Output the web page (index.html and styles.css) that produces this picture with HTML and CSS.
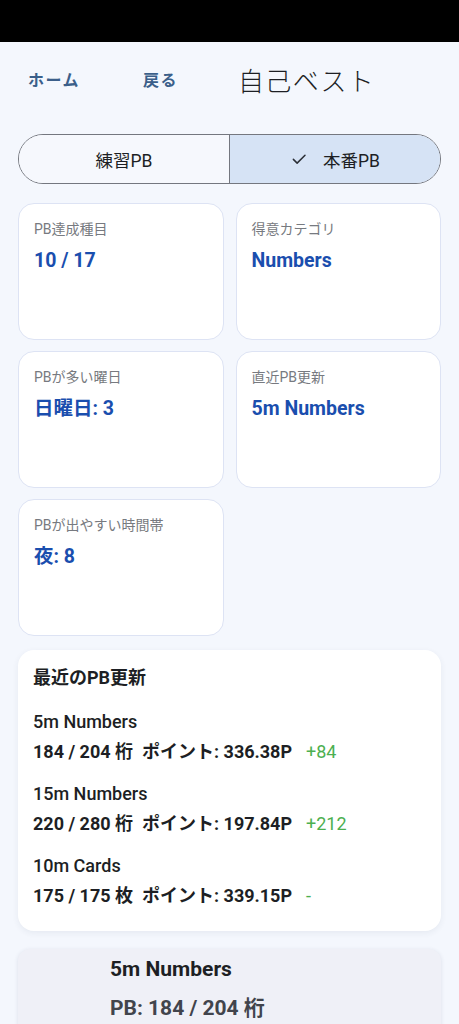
FILE: index.html
```html
<!DOCTYPE html>
<html lang="ja">
<head>
<meta charset="utf-8">
<link rel="stylesheet" href="styles.css">
</head>
<body>
<div class="statusbar"></div>
<header class="topbar">
  <a class="nav nav-home">ホーム</a>
  <a class="nav nav-back">戻る</a>
  <h1 class="title">自己ベスト</h1>
</header>
<div class="segmented">
  <div class="seg">練習PB</div>
  <div class="seg seg-active">
    <svg class="check" viewBox="0 0 24 24" width="18" height="18"><path d="M4.5 12.5l5 5L20 7" fill="none" stroke="#2b2f36" stroke-width="2" stroke-linecap="round" stroke-linejoin="round"/></svg>
    <span>本番PB</span>
  </div>
</div>
<section class="stats">
  <div class="stat"><div class="stat-label">PB達成種目</div><div class="stat-value">10 / 17</div></div>
  <div class="stat"><div class="stat-label">得意カテゴリ</div><div class="stat-value">Numbers</div></div>
  <div class="stat"><div class="stat-label">PBが多い曜日</div><div class="stat-value">日曜日: 3</div></div>
  <div class="stat"><div class="stat-label">直近PB更新</div><div class="stat-value">5m Numbers</div></div>
  <div class="stat"><div class="stat-label">PBが出やすい時間帯</div><div class="stat-value">夜: 8</div></div>
</section>
<section class="recent">
  <h2 class="recent-title">最近のPB更新</h2>
  <div class="item">
    <div class="item-name">5m Numbers</div>
    <div class="item-detail">184 / 204 桁&nbsp;&nbsp;ポイント: 336.38P<span class="diff">+84</span></div>
  </div>
  <div class="item">
    <div class="item-name">15m Numbers</div>
    <div class="item-detail">220 / 280 桁&nbsp;&nbsp;ポイント: 197.84P<span class="diff">+212</span></div>
  </div>
  <div class="item">
    <div class="item-name">10m Cards</div>
    <div class="item-detail">175 / 175 枚&nbsp;&nbsp;ポイント: 339.15P<span class="diff">-</span></div>
  </div>
</section>
<section class="event">
  <div class="event-name">5m Numbers</div>
  <div class="event-pb">PB: 184 / 204 桁</div>
</section>
</body>
</html>
```
FILE: styles.css
```css
* { box-sizing: border-box; }
html, body { margin: 0; padding: 0; }
body {
  background: #f4f7fd;
  font-family: Roboto, "Noto Sans CJK JP", sans-serif;
  color: #1d1f24;
  width: 459px;
  height: 1024px;
  overflow: hidden;
}
.statusbar { height: 42px; background: #000; }
.topbar {
  display: flex;
  align-items: center;
  height: 74px;
  padding-left: 28px;
}
.nav {
  font-size: 16px;
  font-weight: 700;
  color: #3b5f8a;
  letter-spacing: 1.5px;
  font-family: "Noto Sans CJK JP", sans-serif;
}
.nav-home { margin-right: 63px; }
.nav-back { margin-right: 60px; }
.title {
  margin: 0;
  font-size: 26px;
  font-weight: 300;
  letter-spacing: 1.3px;
  font-family: "Noto Sans CJK JP", sans-serif;
  color: #1d1f24;
}
.segmented {
  display: flex;
  margin: 18px 18px 0;
  height: 50px;
  border: 1.5px solid #74777f;
  border-radius: 25px;
  overflow: hidden;
}
.seg {
  flex: 1;
  display: flex;
  align-items: center;
  justify-content: center;
  font-size: 17.5px;
  font-family: Roboto, "Noto Sans CJK JP", sans-serif;
  color: #1d1f24;
  background: #f6f8fd;
}
.seg-active {
  background: #d6e3f5;
  border-left: 1.5px solid #74777f;
  gap: 15px;
}
.check { display: block; }
.stats {
  display: grid;
  grid-template-columns: 1fr 1fr;
  gap: 11px 12px;
  margin: 19px 18px 0;
}
.stat {
  height: 137px;
  background: #fff;
  border: 1px solid #dde3f4;
  border-radius: 16px;
  padding: 15px 15px;
}
.stat-label {
  font-size: 14px;
  color: #777a80;
  line-height: 20px;
}
.stat-value {
  margin-top: 9px;
  font-size: 19.5px;
  font-weight: 700;
  color: #1a4eae;
  line-height: 26px;
}
.recent {
  margin: 14px 18px 0;
  background: #fff;
  border-radius: 16px;
  box-shadow: 0 2px 6px rgba(40, 50, 90, 0.07);
  padding: 15px 15px 20px;
}
.recent-title {
  margin: 0 0 16px;
  font-size: 18px;
  font-weight: 700;
  line-height: 26px;
}
.item { margin-bottom: 12px; }
.item:last-child { margin-bottom: 0; }
.item-name {
  font-size: 18px;
  font-weight: 500;
  line-height: 30px;
}
.item-detail {
  font-size: 18px;
  font-weight: 700;
  line-height: 30px;
}
.diff {
  margin-left: 14px;
  color: #4caf50;
  font-weight: 400;
}
.event {
  margin: 18px 18px 0;
  background: #eff0f7;
  border-radius: 12px;
  box-shadow: 0 1px 4px rgba(40, 50, 90, 0.12);
  padding: 5px 15px 20px 92px;
  height: 200px;
}
.event-name {
  font-size: 21px;
  font-weight: 700;
  line-height: 30px;
}
.event-pb {
  margin-top: 9px;
  font-size: 21px;
  font-weight: 700;
  color: #41444c;
  line-height: 30px;
}
```
